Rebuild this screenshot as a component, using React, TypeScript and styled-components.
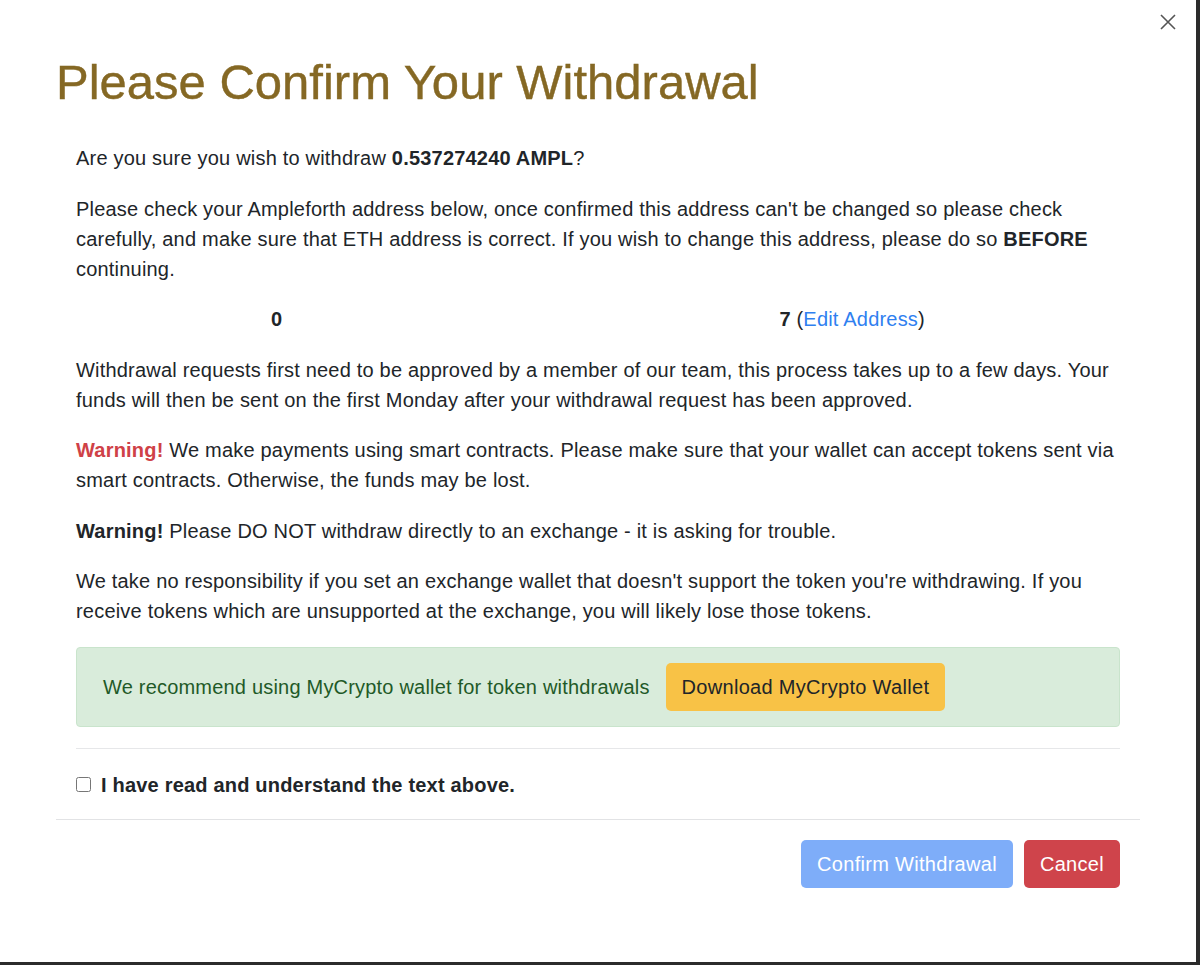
import styled, { createGlobalStyle } from "styled-components";

const GlobalStyle = createGlobalStyle`
  html, body {
    margin: 0;
    padding: 0;
    background: #2b2b2b;
  }
  body {
    font-family: "Liberation Sans", Arial, sans-serif;
    color: #212529;
  }
  * {
    box-sizing: border-box;
  }
`;

const Modal = styled.div`
  width: 1196px;
  height: 962px;
  background: #ffffff;
  padding: 0 56px;
  display: flex;
  flex-direction: column;
  position: relative;
`;

const Header = styled.div`
  padding-top: 52px;
  padding-bottom: 31px;
`;

const Title = styled.h1`
  margin: 0;
  font-size: 49px;
  font-weight: 400;
  line-height: 60px;
  color: #856824;
  -webkit-text-stroke: 0.4px #856824;
`;

const CloseButton = styled.button`
  position: absolute;
  top: 10px;
  right: 16px;
  width: 24px;
  height: 24px;
  padding: 0;
  border: none;
  background: transparent;
  display: flex;
  align-items: center;
  justify-content: center;
  cursor: pointer;
`;

const Body = styled.div`
  padding: 0 20px 19px;
  font-size: 20px;
  line-height: 30px;
  letter-spacing: 0.2px;
`;

const Paragraph = styled.p<{ $center?: boolean }>`
  margin: 0 ${(p) => (p.$center ? "0" : "-8px")} 20.5px 0;
  text-align: ${(p) => (p.$center ? "center" : "left")};
`;

const Strong = styled.strong`
  font-weight: 700;
`;

const Danger = styled.strong`
  font-weight: 700;
  color: #cf4147;
`;

const Redacted = styled.span`
  display: inline-block;
  width: 497px;
  height: 1px;
`;

const Link = styled.a`
  color: #2f80f0;
  text-decoration: none;
`;

const Alert = styled.div`
  display: flex;
  align-items: center;
  gap: 16px;
  padding: 15px 26px;
  background: #d9ecdb;
  border: 1px solid #c9e4cc;
  border-radius: 4px;
  color: #1f5a28;
  margin-bottom: 21px;
`;

const Button = styled.button<{ $variant: "warning" | "primary" | "danger" }>`
  font-family: inherit;
  font-size: 20px;
  line-height: 30px;
  letter-spacing: 0.3px;
  padding: 8px 15px;
  border-radius: 5px;
  border: 1px solid transparent;
  cursor: pointer;
  background: ${(p) =>
    p.$variant === "warning" ? "#f8c246" : p.$variant === "primary" ? "#7eadf9" : "#cf444b"};
  color: ${(p) => (p.$variant === "warning" ? "#212529" : "#ffffff")};
`;

const Divider = styled.hr`
  margin: 0 0 21px;
  border: none;
  border-top: 1px solid #e6e7e9;
`;

const CheckRow = styled.label`
  display: flex;
  align-items: center;
  gap: 10px;
  font-weight: 700;
`;

const Checkbox = styled.input`
  width: 15px;
  height: 15px;
  margin: 0;
`;

const Footer = styled.div`
  border-top: 1px solid #e2e3e5;
  padding: 20px 20px;
  display: flex;
  justify-content: flex-end;
  gap: 11px;
`;

export default function App() {
  return (
    <>
      <GlobalStyle />
      <Modal>
        <CloseButton aria-label="Close">
          <svg width="16" height="16" viewBox="0 0 16 16">
            <path d="M1 1 L15 15 M15 1 L1 15" stroke="#555" strokeWidth="1.6" fill="none" />
          </svg>
        </CloseButton>
        <Header>
          <Title>Please Confirm Your Withdrawal</Title>
        </Header>
        <Body>
          <Paragraph>
            Are you sure you wish to withdraw <Strong>0.537274240 AMPL</Strong>?
          </Paragraph>
          <Paragraph>
            Please check your Ampleforth address below, once confirmed this address can't be
            changed so please check carefully, and make sure that ETH address is correct. If you
            wish to change this address, please do so <Strong>BEFORE</Strong> continuing.
          </Paragraph>
          <Paragraph $center>
            <Strong>
              0<Redacted />7
            </Strong>{" "}
            (<Link href="#">Edit Address</Link>)
          </Paragraph>
          <Paragraph>
            Withdrawal requests first need to be approved by a member of our team, this process
            takes up to a few days. Your funds will then be sent on the first Monday after your
            withdrawal request has been approved.
          </Paragraph>
          <Paragraph>
            <Danger>Warning!</Danger> We make payments using smart contracts. Please make sure
            that your wallet can accept tokens sent via smart contracts. Otherwise, the funds may
            be lost.
          </Paragraph>
          <Paragraph>
            <Strong>Warning!</Strong> Please DO NOT withdraw directly to an exchange - it is
            asking for trouble.
          </Paragraph>
          <Paragraph>
            We take no responsibility if you set an exchange wallet that doesn't support the token
            you're withdrawing. If you receive tokens which are unsupported at the exchange, you
            will likely lose those tokens.
          </Paragraph>
          <Alert>
            <span>We recommend using MyCrypto wallet for token withdrawals</span>
            <Button $variant="warning">Download MyCrypto Wallet</Button>
          </Alert>
          <Divider />
          <CheckRow>
            <Checkbox type="checkbox" />
            I have read and understand the text above.
          </CheckRow>
        </Body>
        <Footer>
          <Button $variant="primary">Confirm Withdrawal</Button>
          <Button $variant="danger">Cancel</Button>
        </Footer>
      </Modal>
    </>
  );
}
